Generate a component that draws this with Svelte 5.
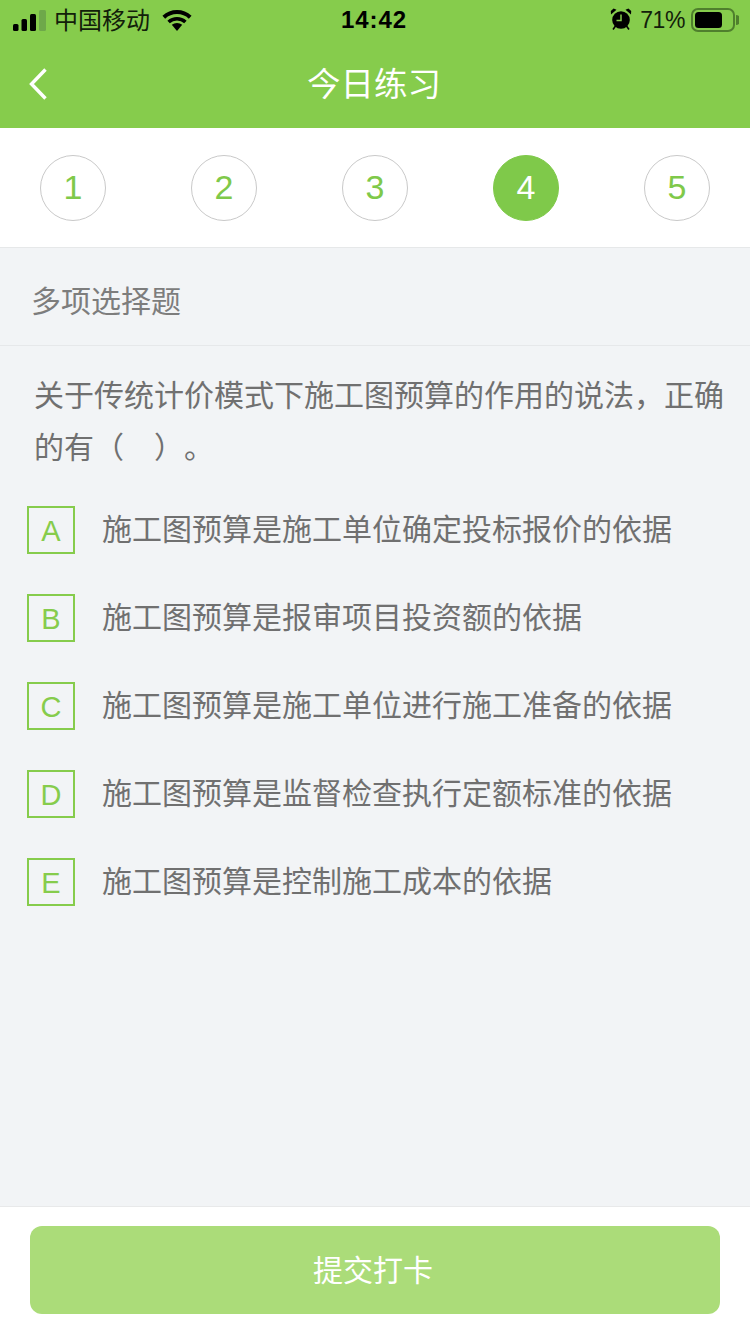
<script>
  const steps = [1, 2, 3, 4, 5];
  const active = 4;
  const options = [
    ['A', '施工图预算是施工单位确定投标报价的依据'],
    ['B', '施工图预算是报审项目投资额的依据'],
    ['C', '施工图预算是施工单位进行施工准备的依据'],
    ['D', '施工图预算是监督检查执行定额标准的依据'],
    ['E', '施工图预算是控制施工成本的依据']
  ];
</script>

<div class="page">
  <header class="head">
    <div class="status">
      <div class="left">
        <svg class="signal" width="34" height="22" viewBox="0 0 34 22">
          <rect x="0" y="15" width="5.500" height="7" rx="1.500" fill="#000"/>
          <rect x="8.500" y="10" width="5.500" height="12" rx="1.500" fill="#000"/>
          <rect x="17" y="5" width="6" height="17" rx="1.500" fill="#000"/>
          <rect x="26" y="1" width="7" height="21" rx="1.500" fill="#6ea84a"/>
        </svg>
        <span class="carrier">中国移动</span>
        <svg class="wifi" width="30" height="22" viewBox="0 0 30 22">
          <path d="M15 22 9.800 15.800a8 8 0 0 1 10.400 0Z" fill="#000"/>
          <path d="M1.800 8.200a19.500 19.500 0 0 1 26.400 0" fill="none" stroke="#000" stroke-width="4"/>
          <path d="M6.600 13a12.500 12.500 0 0 1 16.800 0" fill="none" stroke="#000" stroke-width="3.600"/>
        </svg>
      </div>
      <div class="time">14:42</div>
      <div class="right">
        <svg class="alarm" width="22" height="22" viewBox="0 0 22 22">
          <circle cx="11" cy="12" r="8.800" fill="#000"/>
          <path d="M11 6.500v6H6.500" fill="none" stroke="#86cc4c" stroke-width="1.500"/>
          <path d="M1 6.500 6.500 1.800 3.600.6.800 3Z M21 6.500 15.500 1.800 18.400.6 21.200 3Z" fill="#000"/>
          <path d="M5.500 18l-2.500 3.500M16.500 18l2.500 3.500" stroke="#000" stroke-width="1.600"/>
        </svg>
        <span class="pct">71%</span>
        <svg class="battery" width="48" height="24" viewBox="0 0 48 24">
          <rect x="1" y="1" width="42" height="22" rx="6" fill="none" stroke="#4f7f2d" stroke-width="2"/>
          <rect x="4" y="4" width="27" height="16" rx="3.500" fill="#000"/>
          <path d="M45 7a5 5 0 0 1 0 10Z" fill="#4f7f2d"/>
        </svg>
      </div>
    </div>
    <div class="nav">
      <svg class="back" width="20" height="34" viewBox="0 0 20 34">
        <path d="M17.500 2.500 3.500 17 17.500 31.500" fill="none" stroke="#fff" stroke-width="3.400"/>
      </svg>
      <span class="title">今日练习</span>
    </div>
  </header>

  <div class="steps">
    {#each steps as s}
      <div class="step" class:on={s === active}>{s}</div>
    {/each}
  </div>

  <div class="kind">多项选择题</div>

  <main class="body">
    <p class="question">关于传统计价模式下施工图预算的作用的说法，正确的有（　）。</p>
    <ul class="options">
      {#each options as [k, t]}
        <li class="option">
          <span class="key">{k}</span>
          <span class="text">{t}</span>
        </li>
      {/each}
    </ul>
  </main>

  <footer class="foot">
    <button class="submit">提交打卡</button>
  </footer>
</div>

<style>
  :global(body) { margin: 0; }
  .page {
    width: 750px;
    height: 1334px;
    display: flex;
    flex-direction: column;
    background: #f2f4f6;
    font-family: "Liberation Sans", "Noto Sans CJK SC", sans-serif;
    overflow: hidden;
  }
  .head { background: #86cc4c; height: 128px; flex: none; }
  .status {
    height: 40px;
    display: flex;
    align-items: center;
    justify-content: space-between;
    position: relative;
    padding: 0 13px;
    color: #000;
  }
  .left, .right { display: flex; align-items: center; }
  .carrier { font-size: 24px; margin-left: 7px; color: #12200a; margin-top: -3px; }
  .wifi { margin-left: 12px; margin-top: -1px; }
  .time {
    position: absolute;
    left: 0;
    right: 2px;
    text-align: center;
    font-size: 24px;
    font-weight: 700;
    letter-spacing: 0.9px;
  }
  .alarm { margin-top: -2px; }
  .pct { font-size: 23px; letter-spacing: -0.4px; margin-left: 8px; color: #12200a; }
  .battery { margin-left: 6px; margin-right: -2px; }
  .nav {
    height: 88px;
    display: flex;
    align-items: center;
    justify-content: center;
    position: relative;
  }
  .back { position: absolute; left: 28px; top: 27px; }
  .title { color: #fff; font-size: 33.500px; margin-top: -5px; padding-right: 2px; }
  .steps {
    flex: none;
    height: 92px;
    background: #fff;
    border-bottom: 1px solid #e6e8e9;
    display: flex;
    justify-content: space-between;
    padding: 27px 40px 0;
  }
  .step {
    width: 66px;
    height: 66px;
    border: 1px solid #c9c9c9;
    border-radius: 50%;
    box-sizing: border-box;
    display: flex;
    align-items: center;
    justify-content: center;
    padding-bottom: 2px;
    color: #7fc94a;
    font-size: 34px;
  }
  .step.on { background: #7fc94a; border-color: #7fc94a; color: #fff; }
  .kind {
    flex: none;
    height: 97px;
    line-height: 107px;
    padding-left: 31px;
    border-bottom: 1px solid #e6e8ea;
    font-size: 30px;
    color: #7d7d7d;
  }
  .body { flex: 1; padding: 24px 20px 0 34px; }
  .question {
    margin: 0;
    font-size: 30px;
    line-height: 52px;
    color: #707070;
    text-spacing-trim: space-all;
  }
  .options { list-style: none; margin: 32px 0 0 -7px; padding: 0; }
  .option { display: flex; align-items: center; height: 48px; margin-bottom: 40px; }
  .key {
    width: 48px;
    height: 48px;
    box-sizing: border-box;
    border: 2px solid #86cc4c;
    color: #86cc4c;
    font-size: 29px;
    padding-top: 2px;
    display: flex;
    align-items: center;
    justify-content: center;
    flex: none;
  }
  .text { margin-left: 27px; font-size: 30px; color: #707070; margin-top: -6px; }
  .foot {
    flex: none;
    height: 128px;
    background: #fff;
    border-top: 1px solid #e8e9ea;
    padding: 19px 30px 0;
    box-sizing: border-box;
  }
  .submit {
    width: 690px;
    height: 88px;
    border: 0;
    border-radius: 12px;
    background: #abdc79;
    color: #fff;
    font-size: 30px;
    font-family: inherit;
    padding: 0 4px 4px 0;
    display: block;
  }
</style>
